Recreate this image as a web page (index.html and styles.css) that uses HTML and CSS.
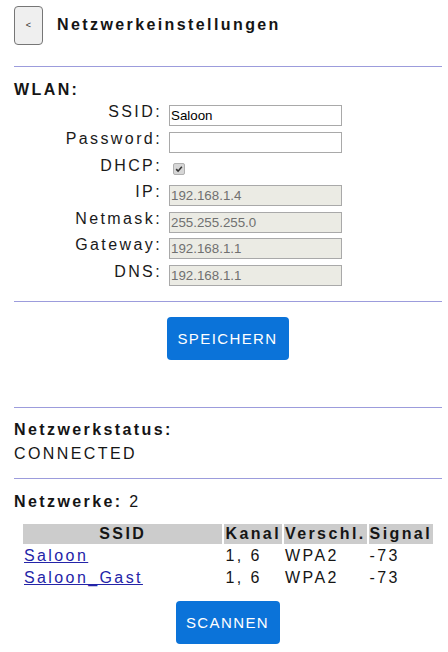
FILE: index.html
```html
<!DOCTYPE html>
<html lang="de">
<head>
<meta charset="utf-8">
<title>Netzwerkeinstellungen</title>
<link rel="stylesheet" href="styles.css">
</head>
<body>
<div class="page">
  <header class="top">
    <button class="back" type="button">&lt;</button>
    <h1 class="title">Netzwerkeinstellungen</h1>
  </header>
  <hr class="rule rule-top">

  <h2 class="heading heading-wlan">WLAN:</h2>
  <form class="form">
    <label class="lbl" for="ssid">SSID:</label>
    <input class="field" id="ssid" type="text" value="Saloon">
    <label class="lbl" for="pw">Password:</label>
    <input class="field" id="pw" type="password" value="">
    <label class="lbl lbl-check">DHCP:</label>
    <span class="check"><svg width="12" height="12" viewBox="0 0 12 12"><path d="M2.6 6.2 L4.9 8.6 L9.4 3.4" fill="none" stroke="#333" stroke-width="1.9"/></svg></span>
    <label class="lbl" for="ip">IP:</label>
    <input class="field field-off" id="ip" type="text" value="192.168.1.4" disabled>
    <label class="lbl" for="nm">Netmask:</label>
    <input class="field field-off" id="nm" type="text" value="255.255.255.0" disabled>
    <label class="lbl" for="gw">Gateway:</label>
    <input class="field field-off" id="gw" type="text" value="192.168.1.1" disabled>
    <label class="lbl" for="dns">DNS:</label>
    <input class="field field-off" id="dns" type="text" value="192.168.1.1" disabled>
  </form>
  <hr class="rule rule-form">
  <div class="actions actions-save">
    <button class="btn" type="button">SPEICHERN</button>
  </div>
  <hr class="rule rule-status">

  <h2 class="heading heading-status">Netzwerkstatus:</h2>
  <p class="status">CONNECTED</p>
  <hr class="rule rule-nets">

  <p class="heading heading-nets"><b>Netzwerke:</b> 2</p>
  <table class="nets">
    <thead>
      <tr><th class="col-ssid">SSID</th><th>Kanal</th><th>Verschl.</th><th>Signal</th></tr>
    </thead>
    <tbody>
      <tr><td><a href="#">Saloon</a></td><td>1, 6</td><td>WPA2</td><td>-73</td></tr>
      <tr><td><a href="#">Saloon_Gast</a></td><td>1, 6</td><td>WPA2</td><td>-73</td></tr>
    </tbody>
  </table>
  <div class="actions actions-scan">
    <button class="btn" type="button">SCANNEN</button>
  </div>
</div>
</body>
</html>
```
FILE: styles.css
```css
html, body {
  margin: 0;
  padding: 0;
  background: #ffffff;
}

body {
  font-family: "Liberation Sans", Arial, sans-serif;
  font-size: 16px;
  color: #151515;
  letter-spacing: 0.15em;
}

.page {
  padding: 6px 6px 0 14px;
}

.top {
  display: flex;
  align-items: center;
  gap: 14px;
  height: 39px;
}

.back {
  width: 29px;
  height: 39px;
  padding: 0;
  border: 1px solid #767676;
  border-radius: 4px;
  background: #efefef;
  color: #333;
  font-family: "Liberation Sans", Arial, sans-serif;
  font-size: 9px;
  letter-spacing: 0;
  line-height: 1;
}

.title {
  margin: 0 0 2px 0;
  font-size: 16px;
  font-weight: bold;
  line-height: 19px;
}

.rule {
  border: 0;
  height: 1px;
  background: #9c9cdc;
  margin: 0;
}

.rule-top {
  margin-top: 21px;
}

.heading {
  margin: 0;
  font-size: 16px;
  font-weight: bold;
  line-height: 19px;
}

.heading-wlan {
  margin-top: 13px;
}

.form {
  display: grid;
  grid-template-columns: 148px 173px;
  grid-auto-rows: 21px;
  column-gap: 7px;
  row-gap: 5.667px;
  margin: 6px 0 0 0;
}

.lbl {
  text-align: right;
  line-height: 14px;
  align-self: start;
  color: #1a1a1a;
}

.lbl-check {
  line-height: 16px;
}

.field {
  box-sizing: border-box;
  width: 173px;
  height: 21px;
  margin: 0;
  padding: 0 1px;
  border: 1px solid #a9a9a9;
  border-radius: 0;
  background: #ffffff;
  font-family: "Liberation Sans", Arial, sans-serif;
  font-size: 13.333px;
  letter-spacing: 0;
  color: #000;
}

.field-off {
  background: #ebebe4;
  color: #707070;
}

.check {
  box-sizing: border-box;
  align-self: center;
  margin-left: 4px;
  width: 12px;
  height: 12px;
  border: 1px solid #b0b0b0;
  border-radius: 2px;
  background: #d6d6d6;
  display: flex;
  align-items: center;
  justify-content: center;
}

.check svg {
  display: block;
  width: 10px;
  height: 10px;
}

.rule-form {
  margin-top: 15px;
}

.actions {
  display: flex;
  justify-content: center;
}

.actions-save {
  margin-top: 15px;
}

.btn {
  height: 43px;
  padding: 0 11px 0 10px;
  border: 0;
  border-radius: 4px;
  background: #0b73d9;
  color: #ffffff;
  font-family: "Liberation Sans", Arial, sans-serif;
  font-size: 15px;
  letter-spacing: 1.4px;
}

.rule-status {
  margin-top: 47px;
}

.heading-status {
  margin-top: 10.5px;
  line-height: 24px;
}

.status {
  margin: 0;
  line-height: 24px;
}

.rule-nets {
  margin-top: 11.5px;
}

.heading-nets {
  margin-top: 13px;
  font-weight: normal;
}

.nets {
  width: 414px;
  margin: 11px auto 0 auto;
  border-spacing: 2px;
}

.nets th {
  background: #cccccc;
  padding: 1px;
  font-weight: bold;
  text-align: left;
  white-space: nowrap;
}

.nets th.col-ssid {
  width: 100%;
  text-align: center;
}

.nets td {
  padding: 1px;
  white-space: nowrap;
}

.nets a {
  color: #2424a8;
}

.actions-scan {
  margin-top: 11px;
}
```
